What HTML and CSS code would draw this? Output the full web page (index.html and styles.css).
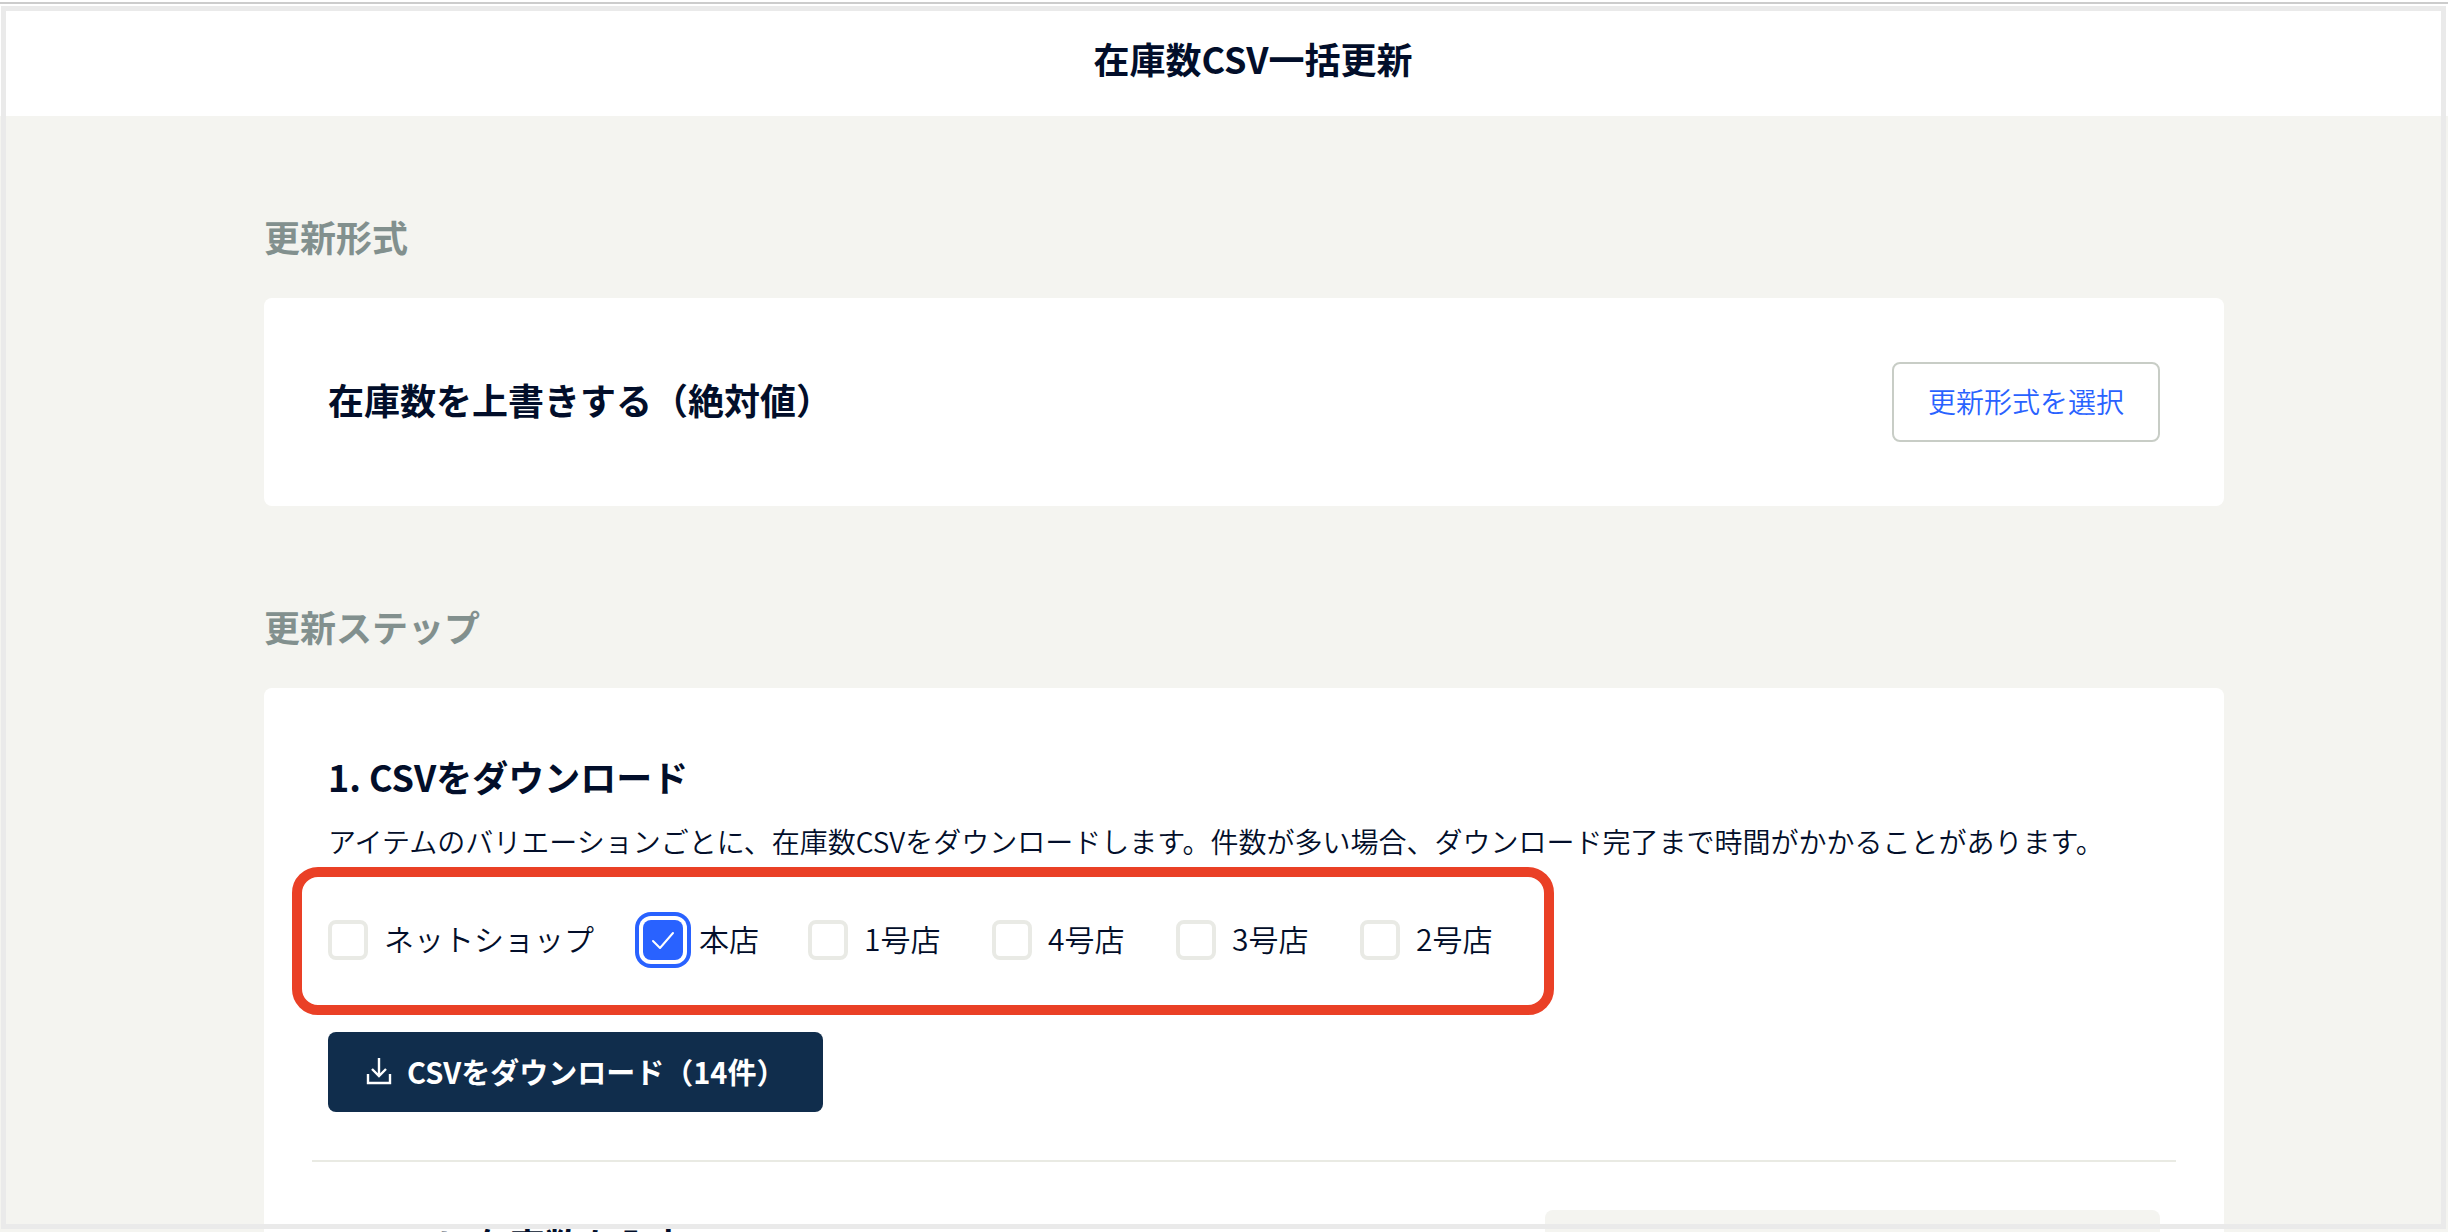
FILE: index.html
```html
<!DOCTYPE html>
<html lang="ja">
<head>
    <meta charset="UTF-8">
    <meta name="viewport" content="width=device-width, initial-scale=1.0">
    <link rel="stylesheet" href="styles.css">
    <title>在庫数CSV一括更新</title>
</head>
<body>
    <header class="page-header">
        <h1>在庫数CSV一括更新</h1>
    </header>
    <main class="content">
        <section class="section">
            <h2>更新形式</h2>
            <div class="card format-card">
                <h3>在庫数を上書きする（絶対値）</h3>
                <button type="button" class="select-button">更新形式を選択</button>
            </div>
        </section>
        <section class="section">
            <h2>更新ステップ</h2>
            <div class="card">
                <div class="step">
                    <h3>1. CSVをダウンロード</h3>
                    <p>アイテムのバリエーションごとに、在庫数CSVをダウンロードします。件数が多い場合、ダウンロード完了まで時間がかかることがあります。</p>
                    <div class="shops">
                        <label><input type="checkbox" name="shop">ネットショップ</label>
                        <label><input type="checkbox" name="shop" checked>本店</label>
                        <label class="numbered"><input type="checkbox" name="shop">1号店</label>
                        <label class="numbered"><input type="checkbox" name="shop">4号店</label>
                        <label class="numbered"><input type="checkbox" name="shop">3号店</label>
                        <label class="numbered"><input type="checkbox" name="shop">2号店</label>
                    </div>
                    <button type="button" class="download-button">
                        <svg width="26" height="28" viewBox="0 0 26 28" fill="none" stroke="currentColor" stroke-width="2.4" aria-hidden="true">
                            <path d="M13 1v17M6 12l7 7 7-7M2 17v9h22v-9"/>
                        </svg>
                        CSVをダウンロード（14件）
                    </button>
                </div>
                <hr>
                <div class="step next-step">
                    <h3>2. CSVに在庫数を入力</h3>
                    <div class="sample"></div>
                </div>
            </div>
        </section>
    </main>
    <div class="frame"></div>
</body>
</html>
```

FILE: styles.css
```css
* {
    box-sizing: border-box;
}

html, body {
    margin: 0;
    height: 100%;
}

body {
    overflow: hidden;
    background: #f4f4f0;
    color: #020e2a;
    font-family: "Noto Sans CJK JP", sans-serif;
    font-size: 28px;
    font-weight: 350;
}

h1, h2, h3, p {
    margin: 0;
}

h1, h2, h3 {
    padding-bottom: 6px;
    font-size: 36px;
    font-weight: 600;
    line-height: 48px;
}

button {
    height: 80px;
    border-radius: 8px;
    font-family: inherit;
    font-size: 28px;
    font-weight: 350;
    cursor: pointer;
}

.page-header {
    height: 116px;
    padding: 34px 0 0 58px;
    background: #fff;
    box-shadow: inset 0 2px #fff, inset 0 4px #ccc;
    text-align: center;
}

.content {
    padding: 0 224px 0 264px;
}

.section {
    padding-top: 96px;
}

.section h2 {
    margin-bottom: 32px;
    color: #82908e;
}

.card {
    padding: 64px 48px;
    border-radius: 8px;
    background: #fff;
}

.format-card {
    display: flex;
    align-items: center;
    justify-content: space-between;
    padding: 64px;
}

.select-button {
    padding: 0 34px 2px;
    border: 2px solid #c8cdc6;
    background: #fff;
    color: #2962ff;
}

.step {
    padding: 0 16px;
}

.step p {
    margin-top: 14px;
    line-height: 42px;
}

/* highlighted shop selection */
.shops {
    display: flex;
    gap: 49px;
    width: fit-content;
    margin: 5px 0 17px -36px;
    padding: 43px 49px 45px 26px;
    border: 10px solid #ea4026;
    border-radius: 26px;
    font-size: 30px;
    line-height: 36px;
}

.shops label {
    display: flex;
    align-items: flex-start;
    gap: 16px;
}

.shops .numbered {
    min-width: 135px;
}

.shops input {
    appearance: none;
    width: 40px;
    height: 40px;
    margin: 0;
    border: 4px solid #e9eae5;
    border-radius: 8px;
    background: #fff;
}

.shops input:checked {
    border: 0;
    background: #2962ff url("data:image/svg+xml,%3Csvg xmlns='http://www.w3.org/2000/svg' viewBox='0 0 40 40'%3E%3Cpath d='M10 21l7 7 13-15' fill='none' stroke='white' stroke-width='2' stroke-linecap='round' stroke-linejoin='round'/%3E%3C/svg%3E");
    box-shadow: 0 0 0 4px #fff, 0 0 0 8px #2962ff;
}

.download-button {
    display: flex;
    align-items: center;
    gap: 15px;
    padding: 0 38px 2px;
    border: 0;
    background: #102d4c;
    color: #fff;
    font-size: 29px;
    font-weight: 600;
}

hr {
    height: 2px;
    margin: 48px 0;
    border: 0;
    background: #e9eae3;
}

.next-step {
    display: flex;
    justify-content: space-between;
}

.next-step h3 {
    padding-top: 10px;
}

.sample {
    width: 615px;
    height: 320px;
    border-radius: 8px;
    background: #f4f4f0;
}

/* outline drawn over the whole page */
.frame {
    position: fixed;
    inset: 6px 2px 3px 1px;
    border: 5px solid #eaeaea;
    pointer-events: none;
}
```
